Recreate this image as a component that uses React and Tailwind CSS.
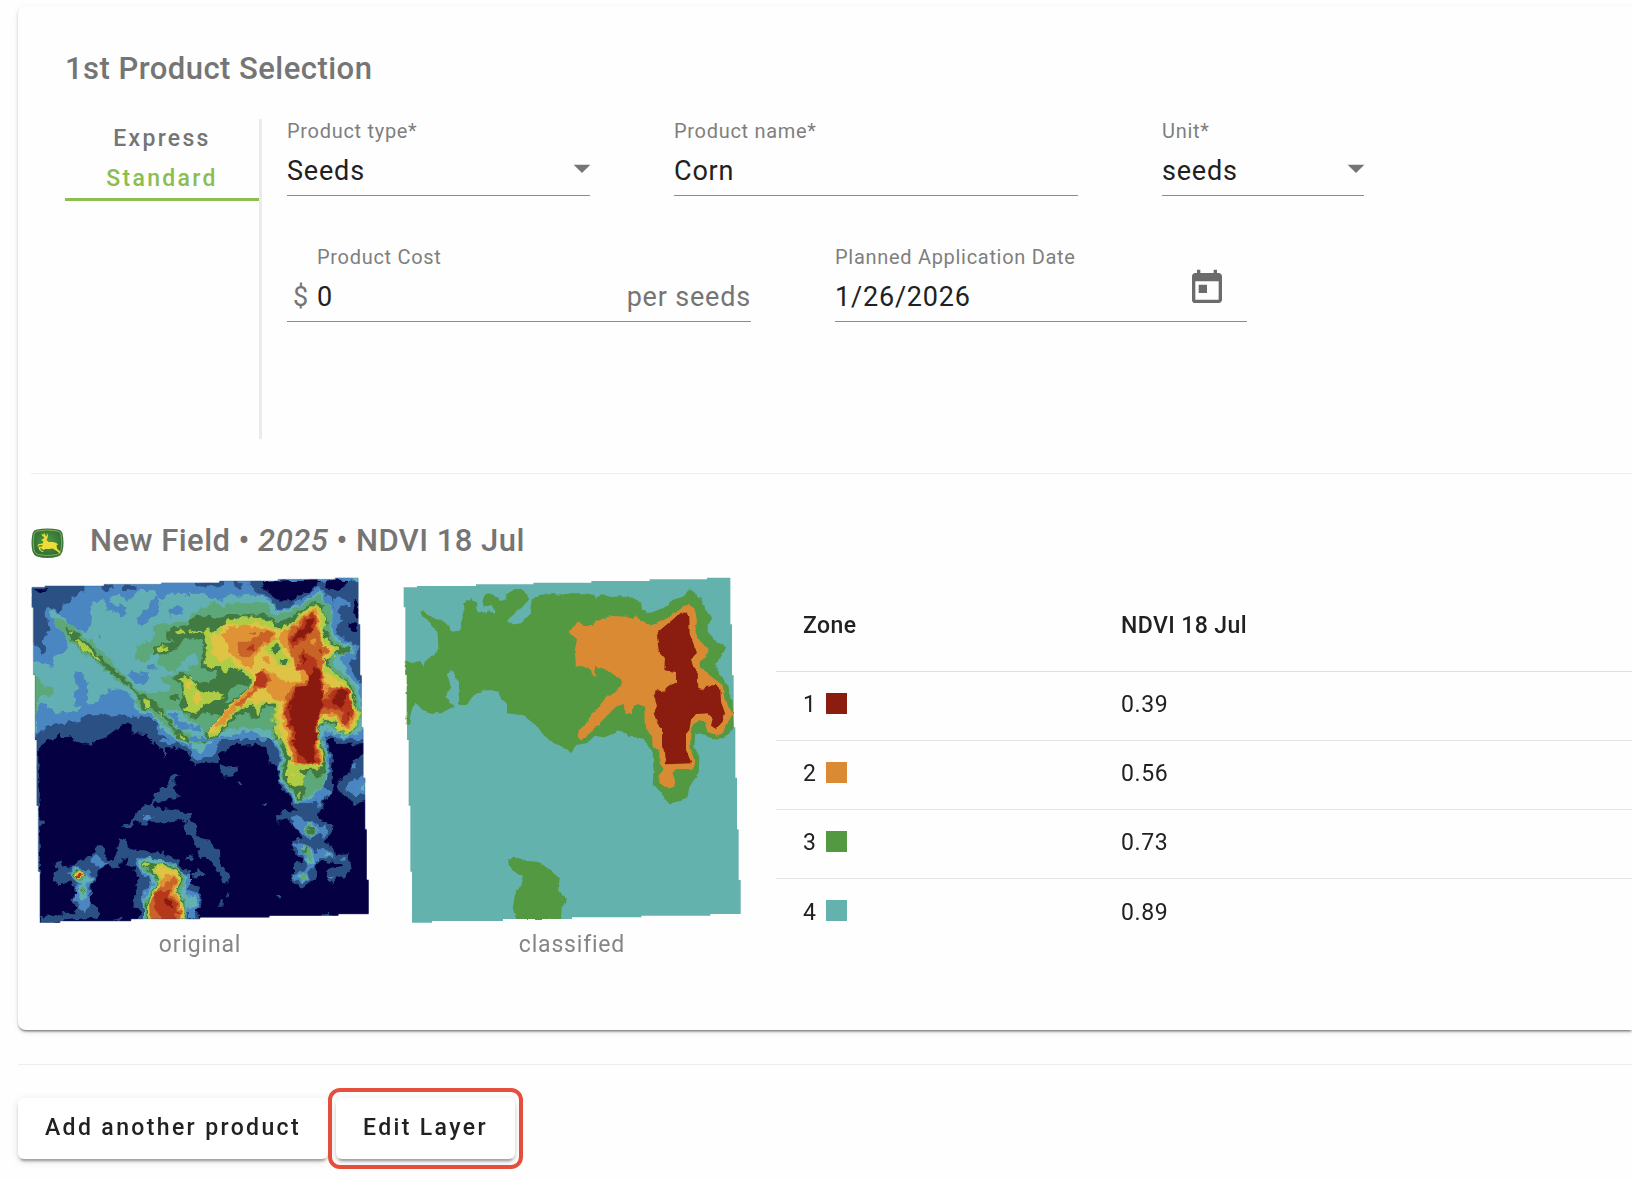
import { MdToday, MdArrowDropDown } from 'react-icons/md'

const ZONES = [
    { id: 1, swatch: 'bg-[#8a1c10]', value: '0.39' },
    { id: 2, swatch: 'bg-[#d98a33]', value: '0.56' },
    { id: 3, swatch: 'bg-[#529941]', value: '0.73' },
    { id: 4, swatch: 'bg-[#63b2ae]', value: '0.89' },
]

const FIELD_OUTLINE =
    'M35 52H75V48H252V43H424V38H598V33H773V28H945V23H1015V163H1020V316H1025V472H1030V623H1035V778H1040V930H1046V1032H955V1037H748V1042H540V1047H333V1053H120V1058H60V905H55V707H50V510H45V315H40V112H35Z'

// NDVI ramp, lowest to highest contrast
const navy = '#040041'
const slate = '#2b5084'
const blue = '#4a86c2'
const teal = '#62b0b3'
const green = '#5ca878'
const forest = '#417b42'
const lime = '#aecd45'
const yellow = '#dec345'
const orange = '#e09335'
const rust = '#c86427'
const red = '#b5371c'
const maroon = '#8a1a10'

const NDVI_TILES = [
    {
        x: 0, y: 0, w: 510, h: 510, base: teal,
        layers: [
            [blue, 'M30 30H545V75L510 78 480 75 440 72 420 90 408 75 400 60H350L345 75 325 95 305 85 300 68 280 70 270 95 285 110 300 100 315 115 318 130 305 140 290 120 260 125 258 100 245 85 220 95 208 110 213 150 208 175 195 190 182 182 165 178 150 165 130 140 100 120 88 115 95 145 115 175 132 190 145 215 137 245 110 258 92 265 105 290 85 285 60 275 30 275Z'],
            [blue, 'M350 150 365 128 385 115 400 85 415 82 418 100 413 130 390 150 365 168 350 165ZM447 125 465 105 485 108 490 120 470 138 450 136ZM165 145 178 135 188 150 175 155ZM320 312 340 300 350 310 362 318 360 302 385 310 392 325 370 342 350 338ZM383 285 398 285 405 295 390 304ZM236 195H244V205H236ZM440 262 450 252 466 262 450 272Z'],
            [blue, 'M45 440 60 400 75 402 85 415 115 428 150 430 175 420 190 412 165 410 160 380 172 360 165 320 170 300 185 305 190 325 200 340 205 365 200 400 222 405 240 380 265 362 300 358 330 375 345 395 345 425 385 430 400 440 420 465 440 490 480 515 545 535V545H45ZM445 430 470 430 478 450 510 462 516 480 485 478 455 450Z'],
            [slate, 'M30 40H200L190 62 165 75 145 95 130 108 118 125 105 118 90 110 78 115 71 125 72 140 88 158 88 180 82 195 72 205 68 222 78 238 65 252 58 235 45 222 30 215ZM245 45 282 42 275 60 260 68 245 60ZM310 43 350 42 345 58 325 63 308 56Z'],
            [slate, 'M48 505 70 475 110 463 160 455 185 452 185 435 210 432 235 436 248 429 275 440 300 436 350 440 380 440 395 450 412 460 415 488 440 505 470 520 500 545H48Z'],
            [navy, 'M50 545 60 512 100 508 115 487 125 500 150 503 185 515 240 510 260 500 290 480 305 465 320 460 335 470V490L375 492 395 510 410 520 425 545ZM45 58H85L75 65 50 68Z'],
            [green, 'M98 145 130 150 150 165 185 195 220 218 250 250 275 275 297 300 330 335 365 365 400 370 440 365 455 345 425 338 420 322 450 318 475 305 545 300V450L520 460 500 440 480 420 440 420 450 450 470 470 500 488 530 515 510 525 480 512 450 480 420 455 395 428 365 418 345 395 358 385 330 358 290 328 260 305 230 280 200 260 170 235 145 208 125 182 105 160Z'],
            [green, 'M35 308 60 325 65 345 105 360 85 378 60 378 50 400 48 435 40 465ZM545 130 520 150 450 158 420 162 398 175 405 192 390 215 345 232 350 268 375 276 400 250 420 262 410 278 440 300 465 305 500 260 520 248 545 255Z'],
            [forest, 'M545 125 525 150 515 168 475 170 440 180 438 202 462 212 435 220 402 232 402 255 440 252 475 232 488 208 545 202ZM133 172 155 178 185 205 215 228 248 268 240 278 210 258 175 222 145 195ZM240 265 290 302 355 368 345 368 285 315 235 275ZM255 288 285 298 298 322 280 315 262 305ZM348 370 375 375 392 388 420 410 430 430 465 470 455 470 430 445 400 418 370 420 360 395ZM455 470 480 478 512 510 500 520 475 505ZM455 328 475 312 510 315 545 325V440L515 440 490 428 480 400 488 370 482 340ZM455 375H475V390H455Z'],
            [lime, 'M410 238 425 228 448 232 445 243 415 248ZM465 183 485 176 498 186 480 196ZM508 183H545V190H512ZM165 208H180L205 235 215 242 240 265 238 275 215 255 195 242ZM368 388 392 395 395 415 375 415ZM413 420 420 425 430 445 418 435ZM475 492 497 505 490 510ZM478 325 510 318 545 330V425L515 435 490 418 502 400 495 380 490 350ZM148 182H158V190H148Z'],
            [yellow, 'M495 335 515 332 545 370V395L525 410 512 395 520 372 498 350Z'],
        ],
    },
    {
        x: 510, y: 0, w: 540, h: 510, base: blue,
        layers: [
            [slate, 'M15 38 100 34 103 45 60 53 15 52ZM132 38 155 40 152 60 135 52ZM170 32H510L520 345 500 330 483 300 480 280 495 262 505 235 480 215 458 205 440 185 442 165 460 150 430 112 425 85 408 75 385 45 370 60 345 80 320 95 300 112 265 120 250 100 238 82 205 68 180 45Z'],
            [blue, 'M430 85 460 80 482 92 478 108 450 110 440 130 430 105Z'],
            [navy, 'M213 33 392 28 378 45 360 60 325 78 310 93 262 95 250 80 240 65 218 55ZM403 28 480 30 465 45 450 60 410 55ZM495 90H507V140L490 130ZM478 155 502 158 495 187 485 190Z'],
            [teal, 'M482 20H510V35H495ZM0 68 50 70 60 85 100 90 120 70 140 80 200 75 230 82 248 105 270 125 310 112 340 95 368 78 390 62 402 80 408 98 425 120 430 145 420 165 432 192 460 215 490 230 490 248 450 260 450 275 470 300 490 330 508 360 512 400 522 430V475L500 490 470 503 430 492 410 478 398 495 392 545H0Z'],
            [blue, 'M0 500 90 502 130 498 155 488 180 482 195 492 215 498 240 508 258 545H0ZM0 465 35 468 30 485 5 485ZM0 250 15 255 10 275 0 275Z'],
            [slate, 'M55 545 95 518 140 512 180 512 215 512 240 520 258 545ZM405 500 440 502 520 512V545H400Z'],
            [navy, 'M110 545 120 532 150 528 215 530 230 545ZM415 545 420 515 450 512 495 515 515 535V545Z'],
            [green, 'M0 135 35 115 55 105 70 95 90 108 110 102 140 100 155 92 175 100 200 95 230 100 240 125 265 135 290 128 330 105 365 88 390 76 408 100 430 140 415 165 415 190 440 215 470 228 490 240 470 255 430 245 432 268 425 282 450 302 480 330 497 360 502 400 516 430 505 470 480 497 450 492 430 470 400 462 388 480 385 545H262L250 505 235 480 180 462 160 475 100 480 90 498 50 508 40 480 20 455 0 455Z'],
            [teal, 'M0 250 20 255 25 275 10 292 0 290Z'],
            [forest, 'M0 152 30 133 55 140 90 145 105 135 165 136 215 132 245 145 260 158 290 150 340 118 375 95 400 105 405 140 415 155 402 170 415 205 440 230 480 230 480 250 440 250 420 265 415 290 440 312 470 332 490 360 495 400 512 430 500 467 480 492 450 488 432 460 400 457 386 480 380 545H272L255 500 250 470 250 410 230 405 215 425 205 450 185 448 178 425 150 430 80 502 50 505 45 490 90 440 60 430 0 445V318L30 340 75 328 78 310 35 295 35 245 40 210 0 203Z'],
            [green, 'M178 340 150 345 120 360 115 385 100 395 115 400 180 350ZM0 290 25 290 40 300 75 303 72 320 40 328 0 322ZM250 410 235 415 230 440 175 455 130 450 110 475 160 470 235 478 252 475Z'],
            [lime, 'M0 322 20 342 25 365 75 367 105 375 95 385 65 390 35 410 20 430 0 435ZM0 184H38V190H0ZM38 182 60 175 70 192 90 170 105 165 108 148 125 143 150 150 155 138 190 140 245 155 265 178 310 152 345 122 375 102 398 115 408 155 400 190 415 215 445 240 425 265 405 270 408 290 440 315 470 337 488 370 490 400 512 430 500 467 475 493 440 482 440 452 400 450 385 472 380 545H272L260 500 250 450 252 402 230 395 215 410 205 435 195 432 190 405 170 405 130 435 80 497 55 502 48 490 70 465 120 405 182 350 182 325 150 300 122 290 108 315 98 292 48 290 45 265 50 235 45 210Z'],
            [yellow, 'M0 335 10 345 0 350ZM5 385 20 370 40 385 20 402ZM60 200 90 190 95 172 120 160 160 168 200 155 235 170 265 185 310 160 350 125 380 108 392 140 397 180 402 220 435 240 415 262 398 272 408 310 450 330 480 360 485 400 502 430 490 470 470 487 445 472 440 447 395 442 382 480 376 545H288L270 480 258 440 265 400 240 392 210 395 200 410 185 390 130 425 75 487 58 495 60 480 120 405 190 348 188 315 165 300 135 285 118 262 95 275 70 255 65 225Z'],
            [orange, 'M95 195 120 170 165 167 245 178 255 200 270 200 298 172 350 130 378 112 386 140 390 190 402 230 418 240 402 265 397 290 408 340 430 350 470 348 482 390 496 430 487 470 465 478 450 462 440 442 400 435 388 450 372 545H302L290 490 272 440 282 400 250 385 235 365 190 375 145 412 92 468 70 478 75 465 130 400 190 345 200 308 225 300 262 308 272 330 300 338 325 330 332 310 318 292 300 240 280 232 265 200 240 225 215 235 195 262 190 295 175 298 150 275 118 245 112 215ZM215 262 235 258 240 275 220 280Z'],
            [yellow, 'M270 325 295 310 320 312 335 318 325 335 300 335ZM225 345 205 360 185 380 215 375 240 390 232 365Z'],
            [lime, 'M220 242 250 208 278 228 285 258 308 275 292 292 265 285 248 258Z'],
            [forest, 'M243 238 258 224 274 238 258 252ZM268 273 280 268 295 272 285 283 272 283Z'],
            [rust, 'M138 232 142 215 175 215 195 200 215 188 238 178 248 192 240 212 215 222 195 245 175 265 150 258ZM165 188 200 182 190 194ZM295 182 320 165 345 142 372 120 382 140 386 190 400 225 418 240 400 255 395 290 402 320 402 375 420 350 470 350 480 400 492 430 482 467 465 472 450 442 430 428 390 432 380 470 372 545H308L300 480 285 440 278 420 288 405 282 375 318 345 350 333 355 312 325 302 315 270 298 240ZM130 410 190 360 198 318 215 300 240 318 240 335 220 352 200 360 150 412Z'],
            [orange, 'M358 212 375 205 380 222 365 225Z'],
            [red, 'M297 205 318 180 340 160 358 130 376 130 380 170 350 200 330 215 312 238ZM325 255 340 238 360 258 375 262 385 290 395 310 402 345 402 380 412 388 430 360 445 352 475 355 478 395 492 425 480 450 465 467 452 450 462 425 440 418 400 415 385 440 376 545H313L305 480 290 455 280 430 300 395 308 370 325 352 352 345 358 320 340 300 318 298 330 280ZM195 345 200 318 210 303 228 318 235 330 222 345 202 355ZM168 238 182 220 195 238 178 250ZM383 240 395 235 392 255Z'],
            [rust, 'M372 262 380 270 388 255Z'],
            [maroon, 'M372 290 388 295 395 340 395 365 402 375 402 405 385 430 378 465 372 545H315L315 480 300 465 302 440 298 410 305 385 320 370 322 350 352 347 358 320ZM308 210 320 185 348 168 352 145 368 140 370 180 345 195 318 215ZM425 390 445 358 468 358 468 390 455 418 440 402 428 405ZM332 260 340 252 346 265 338 282ZM470 435 480 430 478 445Z'],
        ],
    },
    {
        x: 0, y: 510, w: 510, h: 550, base: navy,
        layers: [
            [slate, 'M40 0H75L70 15 55 30V150L60 160 55 240 70 245 58 260 60 400H45ZM160 0H235L215 10 185 10ZM385 0 410 18 430 28 428 50 435 48 435 25 465 25 470 38 482 25 505 38 520 68 545 75V0ZM455 102H485L465 115 462 145 470 165 485 168 465 175 430 178 420 188 400 190 405 205 462 210 522 218 515 228 505 235 520 260 530 280 545 300V325L525 310 515 290 492 280 492 262 500 250 485 238 455 240 430 252 420 245 395 245 380 258 360 248 345 245 325 262 312 260 340 235 360 210 385 190 400 178 405 160 430 140 448 130Z'],
            [slate, 'M298 298 320 295 322 322 350 332 425 340 430 333 435 345 480 360 475 378 505 390 520 402 545 385V545H350L365 510 340 505 345 435 360 415 340 395 345 375 320 380 325 350 305 355 298 385 280 382 260 378 235 390 225 410 215 430 210 490 235 512 232 535 120 545 60 550V525L110 528 140 518 160 520 175 505 152 485 165 465 163 435 145 425 130 435 115 435 105 422 100 400 120 385 100 380 98 370 125 362 130 380 150 385 165 375 185 355 215 345 240 318 255 322 250 345 280 365 290 340ZM500 350 520 350 525 358 510 365ZM280 538 300 533 310 540Z'],
            [navy, 'M120 437 140 430 150 432 135 442Z'],
            [blue, 'M375 225 385 220 402 232 388 245 375 240ZM415 0 445 12 480 10 510 25 530 58 545 60V0ZM210 355 228 345 240 355 250 368 268 370 240 382 222 372ZM145 400 155 385 180 382 205 395 220 415 220 430 208 440 212 470 205 500 192 518 180 510 175 490 160 480 165 440 180 428 155 422ZM345 355 370 350 395 360 440 360 465 372 480 395 515 410 510 435 500 450 530 470 525 500 500 520 500 545H370L375 500 365 480 380 440 400 425 365 400 350 380ZM50 495 55 545 45 545Z'],
            [teal, 'M465 0 500 12 530 25 545 40V0ZM190 400 215 415 215 430 195 430 205 460 195 485 180 478 170 450 190 430 155 415 148 405 165 385 185 388ZM355 360 380 352 440 365 470 380 500 410 495 440 500 465 520 478 510 500 500 505 498 545H372L372 490 385 450 400 430 398 415 375 395 352 380Z'],
            [green, 'M475 0 510 12 545 15V0ZM155 400 170 388 188 390 200 410 180 420 158 415ZM178 450 190 438 202 455 192 472 180 465ZM360 372 372 358 400 368 440 368 470 382 492 405 490 435 478 455 495 480 497 545H376L376 490 395 445 410 425 405 405 370 388Z'],
            [forest, 'M485 0 510 8 520 0ZM157 402 170 390 188 392 195 408 180 418 160 414ZM182 455 190 447 196 457 188 465ZM362 374 375 362 405 372 440 372 468 385 485 405 485 430 472 455 492 480 495 545H380L380 490 402 440 415 420 400 402 375 385Z'],
            [lime, 'M160 402 172 393 186 395 192 408 180 416 163 412ZM184 455 191 452 192 460ZM364 374 378 366 388 372 380 384ZM395 388 420 372 440 378 468 392 480 408 480 430 470 455 490 485 492 545H384L384 490 405 440 418 418Z'],
            [yellow, 'M163 402 175 395 188 402 182 413 165 411ZM403 390 422 378 440 385 465 395 478 412 475 430 468 455 488 490 488 545H388L388 490 408 442 425 420 420 408Z'],
            [orange, 'M165 404 178 399 187 405 180 412 167 411ZM428 412 450 402 468 408 475 420 468 440 462 455 480 480 485 545H390L392 490 410 445Z'],
            [rust, 'M390 490 405 460 420 435 432 440 440 420 465 412 470 425 455 445 455 465 478 490 482 545H395Z'],
            [red, 'M166 405H182V411H168ZM405 465 425 447 432 458 448 452 450 475 470 488 475 515 465 522 475 545H425L425 535 402 500Z'],
            [maroon, 'M433 480 442 475 450 490 462 498 450 502 437 492Z'],
        ],
    },
    {
        x: 510, y: 510, w: 540, h: 550, base: navy,
        layers: [
            [slate, 'M0 0H430L450 12 520 10V0H410L428 50 425 130 432 155 415 175 400 180 400 210 385 215V235L420 250 428 262 420 288 405 300 412 318 430 328 440 345 478 342 485 385 468 408 440 412 430 432 410 410 412 392 430 385 455 380 445 370 380 365 378 410 362 430 335 440 302 425 300 405 312 395V370L340 365 305 325 303 300 340 295 310 255 290 240 262 248V228L285 210 330 212 300 195 300 170 268 140 262 105 265 75 235 70 240 45 225 20 205 18 195 12 130 15 110 32 85 45 82 70 50 65 20 72 0 60ZM92 73 112 82 145 80 130 108 112 110 92 95ZM142 130 150 124 157 130 150 137ZM216 190H232L225 201ZM530 48 500 52 480 75 470 105 446 120V158L470 170 490 192 530 182ZM478 10 505 12 490 20ZM0 238 18 255 20 280 35 303 62 305 68 325 90 330 92 375 115 400 115 432 98 422 92 400 72 380 60 358 25 350 30 325 15 310 0 285ZM0 345 15 355 0 365ZM8 400 25 387 42 398 35 408 0 410ZM106 458H117V470H106ZM88 490 98 482 98 500 88 500ZM258 468H278L268 478ZM395 522 415 518 425 530H395ZM0 430 25 445 40 480 30 500 15 510 30 535H0Z'],
            [blue, 'M0 0H95L75 20 70 45 45 55 20 62 0 45ZM245 0 260 25 268 45 265 90 272 135 300 160 310 188 350 190 380 185 390 205 400 170 428 160 400 138 415 100 418 50 405 0ZM484 72H500V82H486ZM528 110 490 115 465 150 495 165 528 165ZM300 232 325 225 345 245 365 240 385 262 410 260 415 285 400 292 385 278 362 300 335 282 310 252ZM308 312 320 305 340 315 365 320 375 340 395 325 430 338 430 355 385 355 372 380 355 400 365 412 340 428 305 418 308 405 345 390 355 368ZM412 408H432L425 418ZM455 355H470L462 364ZM0 450 25 462 32 480 20 505 15 535H0Z'],
            [teal, 'M0 0H72L50 20 30 42 10 25ZM255 0 275 40 268 90 272 130 300 150 315 185 360 180 390 150 412 110 413 50 398 0ZM528 128 505 142 520 155ZM340 268 360 242 385 270 362 292ZM330 320 365 325 375 370 352 378 352 345ZM405 345 415 338 430 346 415 350ZM325 410 340 398 355 410 340 425ZM0 465 20 475 22 490 0 505Z'],
            [green, 'M0 0H60L50 10 20 12ZM262 0 280 40 273 90 278 130 305 150 322 182 360 170 390 145 408 115 410 50 395 0ZM342 270 360 250 382 270 362 288ZM332 325 360 322 368 350 365 368 355 352ZM330 410 340 402 350 410 340 420Z'],
            [forest, 'M40 0H52V5H40ZM270 0 285 45 278 90 283 125 310 148 318 175 335 182 345 150 342 110 358 92 372 98 378 115 405 105 408 60 392 0ZM348 270 365 260 380 270 362 283ZM335 328 348 322 355 335 342 335Z'],
            [lime, 'M272 0 300 50 290 95 292 125 320 142 345 135 342 110 330 88 402 85 400 50 390 0ZM322 158H329V173H322Z'],
            [yellow, 'M280 0 305 50 305 72 398 77 400 60 385 0ZM300 107 308 100 320 107 308 112Z'],
            [orange, 'M288 0 295 15 308 35 302 60 320 75 395 75 398 60 382 0Z'],
            [rust, 'M296 0 312 40 305 60 330 72 392 74 390 55 378 0Z'],
            [red, 'M304 0 312 20 325 50 320 68 385 73 390 65 382 50 376 0Z'],
            [maroon, 'M308 0 318 32 340 50 345 65 375 67 372 50 375 0Z'],
        ],
    },
]

const CLASSIFIED_ZONES = [
    ['#529941', 'M78 125 90 122 105 138 125 148 145 150 165 172 170 185 195 183 200 175 200 148 208 125 206 103 228 84 248 100 250 127 275 127 285 120 300 132 304 125 290 105 268 110 265 92 272 72 290 68 318 93 333 90 338 72 360 58 385 57 405 88 385 110 350 140 338 152 350 164 380 160 405 135 412 92 430 75 480 72 487 77 525 70 570 70 600 75 605 87 622 72 650 82 680 78 688 82 705 78 740 97 743 118 770 128 820 108 835 90 865 80 885 58 905 75 922 85 925 108 955 148 940 165 940 185 965 212 995 232 985 255 960 282 975 310 1003 350 1005 380 1015 395 1018 475 990 505 950 505 915 488 903 490 900 530 915 560 913 610 885 650 880 680 862 692 825 700 808 688 800 665 775 645 778 600 775 550 750 510 735 503 705 500 680 482 630 502 600 498 580 518 548 525 530 550 515 535 475 518 445 492 430 470 385 435 355 432 338 430 338 402 320 385 310 365 290 360 262 362 235 378 218 405 194 405V335L182 322 178 303 168 300 158 315 168 345 165 362 153 378 165 402 185 410 165 415 145 430 115 430 85 420 65 400 55 412 47 440 45 465 37 462 37 315 33 270 50 280 78 273 88 290 92 270 118 258 132 235 130 190 110 160 85 142ZM340 872 358 860 400 872 435 877 460 895 495 925 495 940 487 960 517 985 515 1000 502 1015 500 1047H366L355 1015 362 975 385 935 382 915 350 900Z'],
    ['#d98a33', 'M522 185 540 170 550 153 570 168 590 168 610 150 650 138 700 140 715 147 722 138 758 163 785 162 830 138 862 115 880 102 900 115 908 150 903 185 915 210 943 240 935 262 915 275 918 295 985 345 990 385 1015 432 1000 460 985 490 968 497 938 485 935 455 915 450 895 465 888 490 888 535 903 578 897 597 845 598 833 607 843 630 840 650 825 655 795 640 795 617 810 600 795 578 795 542 775 528 773 500 755 475 752 410 730 402 718 412 708 430 692 428 688 402 665 410 590 485 575 502 558 508 550 495 555 480 580 455 590 430 608 418 640 375 662 368 683 338 680 328 655 312 625 295 605 290 600 302 607 318 600 320 580 292 557 288 545 290 541 242 548 208Z'],
    ['#8a1c10', 'M788 195 800 178 860 128 880 128 885 140 886 192 908 248 890 268 895 285 910 305 912 357 925 360 940 347 965 345 978 358 980 395 992 430 985 455 965 477 950 467 955 445 940 430 905 432 890 450 885 480 875 492 875 540 892 580 815 583 812 545 803 530 803 475 790 462 778 430 788 408 778 375 788 360 810 365 818 350 845 338 845 310 810 300 812 265 793 242Z'],
]

// roughens the zone borders so they read as raster contours
const EdgeNoise = ({ id, scale }) => (
    <filter id={id} filterUnits="userSpaceOnUse" x="0" y="0" width="1070" height="1080" colorInterpolationFilters="sRGB">
        <feTurbulence type="fractalNoise" baseFrequency="0.05" numOctaves="2" seed="4" />
        <feDisplacementMap in="SourceGraphic" scale={scale} xChannelSelector="R" yChannelSelector="G" />
    </filter>
)

const OriginalMap = () => (
    <svg viewBox="33 21 1014 1038" className="w-[338px]" role="img" aria-label="original">
        <EdgeNoise id="ndvi-noise" scale={24} />
        <clipPath id="ndvi-outline">
            <path d={FIELD_OUTLINE} />
        </clipPath>
        <g clipPath="url(#ndvi-outline)">
            <path fill={slate} d={FIELD_OUTLINE} />
            <g filter="url(#ndvi-noise)">
                {NDVI_TILES.map(({ x, y, w, h, base, layers }) => (
                    <svg key={`${x}-${y}`} x={x} y={y} width={w} height={h} viewBox={`0 0 ${w} ${h}`}>
                        <rect width={w} height={h} fill={base} />
                        {layers.map(([fill, d], i) => <path key={i} fill={fill} d={d} />)}
                    </svg>
                ))}
            </g>
        </g>
    </svg>
)

const ClassifiedMap = () => (
    <svg viewBox="26 21 1014 1038" className="w-[338px]" role="img" aria-label="classified">
        <EdgeNoise id="zone-noise" scale={10} />
        <path d={FIELD_OUTLINE} transform="translate(-7 0)" fill="#63b2ae" />
        <g filter="url(#zone-noise)">
            {CLASSIFIED_ZONES.map(([fill, d]) => <path key={fill} fill={fill} d={d} />)}
        </g>
    </svg>
)

const DeereLogo = () => (
    <svg viewBox="0 0 66 62" className="w-[33px] shrink-0" aria-hidden="true">
        <defs>
            <radialGradient id="badge" cx="50%" cy="45%" r="60%">
                <stop offset="0" stopColor="#4f9a43" />
                <stop offset="1" stopColor="#2b6c31" />
            </radialGradient>
        </defs>
        <path fill="#3c7339" d="M12 3Q33-1 54 3 61 4 63 11 67 30 63 47 61 54 54 57 33 63 12 57 5 54 3 47-1 30 3 11 5 4 12 3Z" />
        <path fill="url(#badge)" stroke="#a3bd62" strokeWidth="1.5" d="M14 6Q33 2 52 6 59 7 60 13 63 30 60 44 58 51 52 53 33 57 14 53 8 51 6 44 3 30 6 13 7 7 14 6Z" />
        <path fill="#eedc3a" d="M20 24 24 22 27 19 22 15 21 11 25 14 26 9 29 15 31 17 32 10 34 15 33 20 31 24 35 28 44 28 51 30 54 34 51 34 52 41 58 47 59 52 50 45 43 41 36 42 29 42 25 44 18 39 20 44 26 48 22 48 16 43 15 37 22 37 24 35 18 34 12 37 15 32 23 31 25 27Z" />
    </svg>
)

const Field = ({ id, label, className, labelClass = '', children }) => (
    <div className={className}>
        <label htmlFor={id} className={`block text-xl leading-6 tracking-[0.035em] text-[#7f7f7f] ${labelClass}`}>{label}</label>
        <div className="relative mt-[5px] flex h-12 items-start border-b border-[#8c8c8c] text-[27px] leading-[46px] tracking-[0.03em] text-[#212121]">
            {children}
        </div>
    </div>
)

const SelectField = ({ id, label, value, className }) => (
    <Field id={id} label={label} className={className}>
        <select id={id} className="h-[46px] w-full appearance-none bg-transparent outline-none" defaultValue={value}>
            <option>{value}</option>
        </select>
        <MdArrowDropDown className="pointer-events-none absolute -right-3 top-0 h-10 w-10 text-[#757575]" />
    </Field>
)

const ProductForm = () => (
    <section className="px-[47px] pt-[45px]">
        <h2 className="text-[31px] font-medium leading-9 tracking-[0.015em] text-[#757575]">1st Product Selection</h2>
        <div className="mt-8 flex">
            <div className="flex h-80 w-[197px] shrink-0 flex-col border-r-3 border-[#ebebeb] text-[23px] font-medium tracking-widest">
                <button type="button" className="h-[41px] text-[#757575]">Express</button>
                <button type="button" className="h-[41px] border-b-3 border-[#8bbd50] text-[#8bbd50]">Standard</button>
            </div>
            <form className="flex-1 pl-[25px]">
                <div className="flex gap-[84px]">
                    <SelectField id="product-type" label="Product type*" value="Seeds" className="w-[303px]" />
                    <Field id="product-name" label="Product name*" className="w-[404px]">
                        <input id="product-name" className="h-[46px] w-full outline-none" defaultValue="Corn" />
                    </Field>
                    <SelectField id="unit" label="Unit*" value="seeds" className="w-[202px]" />
                </div>
                <div className="mt-[49px] flex gap-[84px]">
                    <Field id="cost" label="Product Cost" labelClass="pl-[30px]" className="w-[464px]">
                        <span className="w-[30px] shrink-0 pl-[6px] text-[#757575]">$</span>
                        <input id="cost" className="h-[46px] w-full min-w-0 outline-none" defaultValue="0" />
                        <span className="shrink-0 text-[#757575]">per seeds</span>
                    </Field>
                    <Field id="date" label="Planned Application Date" className="w-[412px]">
                        <input id="date" className="h-[46px] w-full min-w-0 outline-none" defaultValue="1/26/2026" />
                        <button type="button" aria-label="Open calendar" className="mr-5 shrink-0">
                            <MdToday className="-mt-[6px] h-10 w-10 text-[#6b6b6b]" />
                        </button>
                    </Field>
                </div>
            </form>
        </div>
    </section>
)

const ZoneTable = () => (
    <table className="min-w-0 flex-1 self-start text-left text-[23px] tracking-wide text-[#212121]">
        <thead>
            <tr className="h-[94px] border-b border-[#e0e0e0] tracking-[0.018em]">
                <th className="w-[318px] pl-[27px] pt-1 font-medium">Zone</th>
                <th className="pl-[27px] pt-1 font-medium">NDVI 18 Jul</th>
            </tr>
        </thead>
        <tbody>
            {ZONES.map(({ id, swatch, value }) => (
                <tr key={id} className="h-[69px] border-b border-[#e4e4e4] last:border-b-0">
                    <td className="pl-[27px]">
                        <span className="flex items-center gap-[9px]">
                            {id}
                            <span className={`mb-1 h-[21px] w-[21px] ${swatch}`} />
                        </span>
                    </td>
                    <td className="pl-[27px]">{value}</td>
                </tr>
            ))}
        </tbody>
    </table>
)

const LayerPreview = () => (
    <section className="ml-[13px] mt-[34px] border-t border-[#ededed] pt-[49px]">
        <h2 className="flex items-end gap-[26px] text-[31px] font-medium leading-9 tracking-[0.015em] text-[#757575]">
            <DeereLogo />
            <span>New Field • <i>2025</i> • NDVI 18 Jul</span>
        </h2>
        <div className="mt-[18px] flex">
            <figure className="mr-[34px] shrink-0 text-center text-[23px] leading-7 tracking-[0.035em] text-[#858585]">
                <OriginalMap />
                <figcaption className="mt-2">original</figcaption>
            </figure>
            <figure className="mr-[35px] shrink-0 text-center text-[23px] leading-7 tracking-[0.035em] text-[#858585]">
                <ClassifiedMap />
                <figcaption className="mt-2">classified</figcaption>
            </figure>
            <ZoneTable />
        </div>
    </section>
)

const ActionButton = ({ children }) => (
    <button
        type="button"
        className="h-[61px] rounded-md bg-white px-[27px] text-[23px] font-medium tracking-[0.103em] text-[#212121] shadow-[0_5px_2px_-3px_rgba(0,0,0,0.2),0_3px_3px_rgba(0,0,0,0.14),0_2px_8px_rgba(0,0,0,0.12)]"
    >
        {children}
    </button>
)

export default function App() {
    return (
        <div className="min-h-screen overflow-hidden bg-[#fefefe] pl-[18px] pt-[6px] font-[Roboto,sans-serif]">
            <main className="rounded-l-lg bg-[#fefefe] pb-[71px] shadow-[0_3px_2px_-2px_rgba(0,0,0,0.3),0_2px_2px_rgba(0,0,0,0.2),0_2px_5px_rgba(0,0,0,0.12)]">
                <ProductForm />
                <LayerPreview />
            </main>
            <footer className="mt-[34px] flex items-center border-t border-[#ededed] pt-[23px]">
                <ActionButton>Add another product</ActionButton>
                <div className="rounded-xl border-4 border-[#e64f3c] px-1 py-[6px]">
                    <ActionButton>Edit Layer</ActionButton>
                </div>
            </footer>
        </div>
    )
}
